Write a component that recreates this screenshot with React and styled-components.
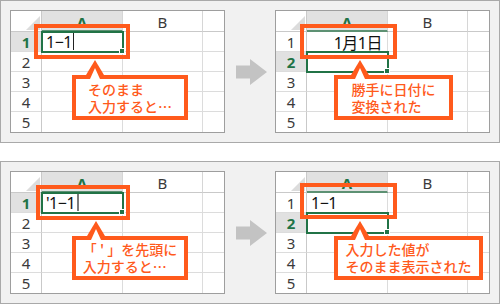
import styled, { createGlobalStyle } from "styled-components";

const ORANGE = "#ff5a1c";
const GREEN = "#217346";

const GlobalStyle = createGlobalStyle`
  body {
    margin: 0;
    background: #fff;
    font-family: "Noto Sans", "Noto Sans CJK JP", sans-serif;
  }
`;

function Arrow() {
  return (
    <svg width="31" height="26" viewBox="0 0 31 26">
      <polygon points="0,6.5 14,6.5 14,0 31,13 14,26 14,19.5 0,19.5" fill="#c3c3c3" />
    </svg>
  );
}

function Sheet({ activeRow, a1, frame, callout }) {
  const rows = [1, 2, 3, 4, 5];
  return (
    <SheetWrap>
      <Grid>
        <Corner />
        <ColHead $sel>A</ColHead>
        <ColHead>B</ColHead>
        <ColHead $last />
        {rows.map((r) => (
          <Row key={r}>
            <RowHead $sel={r === activeRow} $lastRow={r === 5}>
              {r}
            </RowHead>
            <Cell $sel={r === activeRow} $lastRow={r === 5} $align={r === 1 ? a1.align : "left"}>
              {r === 1 && a1.text}
              {r === 1 && a1.cursor && <Caret $thick={a1.cursor === "thick"} />}
            </Cell>
            <Cell $lastRow={r === 5} />
            <Cell $lastRow={r === 5} $last />
          </Row>
        ))}
      </Grid>
      <Frame {...frame} />
      <Callout {...callout.box}>
        <CalloutText>
          {callout.lines.map((l, i) => (
            <div key={i}>{l}</div>
          ))}
        </CalloutText>
      </Callout>
    </SheetWrap>
  );
}

export default function App() {
  return (
    <Page>
      <GlobalStyle />
      <Panel>
        <Sheet
          activeRow={1}
          a1={{ text: "1−1", align: "left", cursor: "thin" }}
          frame={{ $l: 24, $t: 14, $w: 96, $h: 35 }}
          callout={{
            box: { $l: 62, $t: 65, $w: 116, $h: 45, $tip: 23 },
            lines: ["そのまま", "入力すると…"],
          }}
        />
        <ArrowSlot>
          <Arrow />
        </ArrowSlot>
        <Sheet
          activeRow={2}
          a1={{ text: "1月1日", align: "right" }}
          frame={{ $l: 25, $t: 14, $w: 97, $h: 35 }}
          callout={{
            box: { $l: 59, $t: 65, $w: 119, $h: 45, $tip: 26 },
            lines: ["勝手に日付に", "変換された"],
          }}
        />
      </Panel>
      <Panel>
        <Sheet
          activeRow={1}
          a1={{ text: "'1−1", align: "left", cursor: "thick" }}
          frame={{ $l: 26, $t: 14, $w: 94, $h: 35 }}
          callout={{
            box: { $l: 62, $t: 65, $w: 116, $h: 44, $tip: 24 },
            lines: ["「 ' 」を先頭に", "入力すると…"],
          }}
        />
        <ArrowSlot>
          <Arrow />
        </ArrowSlot>
        <Sheet
          activeRow={2}
          a1={{ text: "1−1", align: "left" }}
          frame={{ $l: 25, $t: 12, $w: 97, $h: 36 }}
          callout={{
            box: { $l: 59, $t: 65, $w: 149, $h: 44, $tip: 26 },
            lines: ["入力した値が", "そのまま表示された"],
          }}
        />
      </Panel>
    </Page>
  );
}

// Styled Components

const Page = styled.div`
  width: 500px;
  height: 304px;
  display: flex;
  flex-direction: column;
  justify-content: space-between;
`;

const Panel = styled.section`
  box-sizing: border-box;
  height: 143px;
  border: 1px solid #a9a9a9;
  background: #f1f1f1;
  padding: 9px;
  display: flex;
`;

const ArrowSlot = styled.div`
  flex: 1;
  display: flex;
  align-items: center;
  justify-content: center;
  padding-left: 3px;
`;

const SheetWrap = styled.div`
  position: relative;
  width: 215px;
  flex: none;
`;

const Grid = styled.div`
  box-sizing: border-box;
  width: 215px;
  height: 123px;
  display: grid;
  grid-template-columns: 31px 81px 80px 1fr;
  grid-template-rows: 21px repeat(5, 20px);
  border: 1px solid #9e9e9e;
  background: #fff;
  font-size: 14px;
  color: #3a3a3a;
`;

const Row = styled.div`
  display: contents;
`;

const Corner = styled.div`
  position: relative;
  border-right: 1px solid #c9c9c9;
  border-bottom: 1px solid #c9c9c9;
  background: #fff;

  &::after {
    content: "";
    position: absolute;
    right: 1px;
    bottom: 1px;
    border-left: 14px solid transparent;
    border-bottom: 14px solid #dcdcdc;
  }
`;

const ColHead = styled.div`
  box-sizing: border-box;
  display: flex;
  align-items: center;
  justify-content: center;
  padding-top: 2px;
  background: ${(p) => (p.$sel ? "#e1e1e1" : "#fff")};
  color: ${(p) => (p.$sel ? GREEN : "#3a3a3a")};
  font-weight: ${(p) => (p.$sel ? 700 : 400)};
  font-size: 15px;
  border-right: ${(p) => (p.$last ? "none" : "1px solid #d6d6d6")};
  border-bottom: ${(p) => (p.$sel ? `2px solid #5d9173` : "1px solid #c9c9c9")};
`;

const RowHead = styled.div`
  box-sizing: border-box;
  display: flex;
  align-items: center;
  justify-content: center;
  background: ${(p) => (p.$sel ? "#e1e1e1" : "#fff")};
  color: ${(p) => (p.$sel ? GREEN : "#3a3a3a")};
  font-weight: ${(p) => (p.$sel ? 700 : 400)};
  font-size: 15px;
  border-right: 1px solid #c9c9c9;
  border-bottom: ${(p) => (p.$lastRow ? "none" : "1px solid #dcdcdc")};
`;

const Cell = styled.div`
  box-sizing: border-box;
  position: relative;
  display: flex;
  align-items: center;
  justify-content: ${(p) => (p.$align === "right" ? "flex-end" : "flex-start")};
  padding: 0 5px 0 4px;
  color: #111;
  font-size: 16px;
  letter-spacing: -0.5px;
  border-right: ${(p) => (p.$last ? "none" : "1px solid #dcdcdc")};
  border-bottom: ${(p) => (p.$lastRow ? "none" : "1px solid #dcdcdc")};
  ${(p) =>
    p.$sel &&
    `
    outline: 2px solid ${GREEN};
    outline-offset: -1px;
    z-index: 1;
    &::after {
      content: "";
      position: absolute;
      right: -3px;
      bottom: -3px;
      width: 4px;
      height: 4px;
      background: ${GREEN};
      border: 1px solid #fff;
    }
  `}
`;

const Caret = styled.span`
  display: inline-block;
  width: ${(p) => (p.$thick ? "2px" : "1px")};
  height: 17px;
  margin-left: ${(p) => (p.$thick ? "2px" : "1px")};
  background: ${(p) => (p.$thick ? "#7a7a7a" : "#222")};
`;

const Frame = styled.div`
  position: absolute;
  left: ${(p) => p.$l}px;
  top: ${(p) => p.$t}px;
  width: ${(p) => p.$w}px;
  height: ${(p) => p.$h}px;
  box-sizing: border-box;
  border: 4px solid ${ORANGE};
  z-index: 2;
`;

const Callout = styled.div`
  position: absolute;
  left: ${(p) => p.$l}px;
  top: ${(p) => p.$t}px;
  width: ${(p) => p.$w}px;
  height: ${(p) => p.$h}px;
  box-sizing: border-box;
  border: 4px solid ${ORANGE};
  background: #fff;
  display: flex;
  align-items: center;
  justify-content: center;
  z-index: 3;

  &::before {
    content: "";
    position: absolute;
    left: ${(p) => p.$tip - 13}px;
    top: -19px;
    border-left: 9px solid transparent;
    border-right: 9px solid transparent;
    border-bottom: 15px solid ${ORANGE};
  }

  &::after {
    content: "";
    position: absolute;
    left: ${(p) => p.$tip - 9}px;
    top: -11px;
    border-left: 5px solid transparent;
    border-right: 5px solid transparent;
    border-bottom: 11px solid #fff;
  }
`;

const CalloutText = styled.div`
  color: ${ORANGE};
  font-family: "Noto Sans CJK JP", sans-serif;
  font-size: 14px;
  line-height: 17px;
  font-weight: 500;
  text-align: left;
  white-space: nowrap;
`;
